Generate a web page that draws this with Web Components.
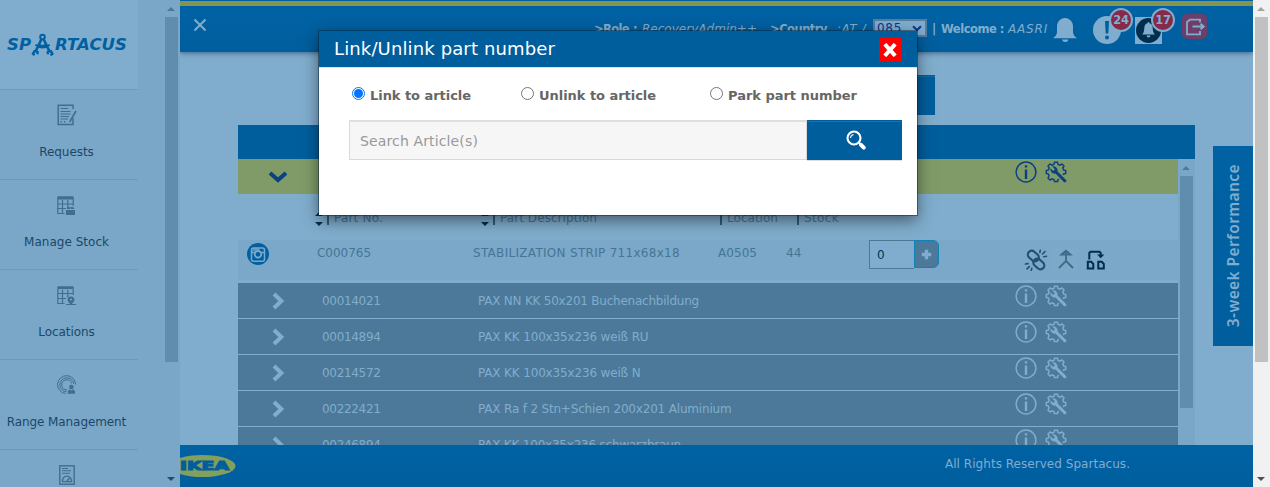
<!DOCTYPE html>
<html lang="en">
<head>
<meta charset="utf-8">
<title>Spartacus</title>
<style>
html,body{margin:0;height:100%;overflow:hidden}
body{font:12px/16px "DejaVu Sans",Verdana,sans-serif;background:#80adcd}
</style>
</head>
<body>
<sp-app></sp-app>
<script>
const define=(name,html,setup)=>{
  const t=document.createElement('template');
  customElements.define(name,class extends HTMLElement{
    connectedCallback(){
      if(this.shadowRoot)return;
      t.innerHTML=typeof html==='function'?html(this):html;
      this.attachShadow({mode:'open'}).appendChild(t.content.cloneNode(true));
      if(setup)setup(this);
    }
  });
};

/* A run of text tracked so that it fills the width given in "w". */
define('fit-text','<style>:host{display:inline-block;flex:none;white-space:pre}span{display:inline-block;white-space:pre}</style><span><slot></slot></span>',el=>{
  const w=+el.getAttribute('w'),s=el.shadowRoot.querySelector('span');
  el.style.width=w+'px';
  const n=el.textContent.length;
  s.style.letterSpacing=((w-s.getBoundingClientRect().width)/n)+'px';
});

const gear='<g transform="translate(11 11)" fill="none" stroke="currentColor" stroke-width="1.5"><path stroke-linejoin="round" d="M3 7.3 2 7.6 1.6 9.6H-1.6L-2 7.6-4 6.8-6 8-8 6-6.9 4-7.6 2-9.7 1.6V-1.6L-7.6-2-6.8-4-8-6-6-8-4-6.8-2-7.6-1.6-9.7H1.6L2-7.6 4-6.8 6-8 8-6 6.8-4 7.6-2 9.7-1.6V1.6L7.6 2 7.2 3"/><path stroke="none" fill="currentColor" d="M-5.6-3.8-2.8-1.1-1.1-2.7-3.8-5.5A4.4 4.4 0 0 1 1.6-.4L10.3 8.2Q10.9 10.5 8.1 10.3L-.5 1.6A4.4 4.4 0 0 1-5.6-3.8Z"/></g>';
const icons={
 close:[14,'<path d="M1.5 1.5 12.5 12.5M12.5 1.5 1.5 12.5" stroke="currentColor" stroke-width="2" fill="none"/>'],
 requests:[20,'<g fill="none" stroke="currentColor" stroke-width="1.5"><path d="M16 5V1.2H1.2V20.5H16V14"/><path stroke-width="1.1" d="M3.5 4.5H11M3.5 7.5H13.5M3.5 10H13.5M3.5 12.5H12M3.5 15H11"/><path d="M3.5 17.7h1.4M7 17.7h1.4" stroke-width="1.5"/><path d="M19 7 13.8 15.8 13 18" stroke-width="1.7"/></g>',22],
 stock:[19,'<g fill="none" stroke="currentColor"><path fill="currentColor" d="M.8.8H16.2V3H.8z"/><path stroke-width="1.2" d="M.8 3V17.5H7.5M16.2 3V10M5.5 4V17M10.8 4V12M.8 8H16M.8 12.5H9"/><path fill="currentColor" stroke="none" d="M9 14H18V19H9zM9.5 13 11 11h2.5V13zM14 13V11h2l1.5 2z"/></g>'],
 locations:[19,'<g fill="none" stroke="currentColor"><path fill="currentColor" d="M.8.8H16.2V2.6H.8z"/><path stroke-width="1.2" d="M.8 3V17.5H7.5M16.2 3V9M5.5 4V17M10.8 4V11.5M.8 7.5H16M.8 12.5H9M9 18.5H19"/><path fill="currentColor" fill-rule="evenodd" stroke="none" d="M14 10.5a3.4 3.4 0 0 1 3.4 3.4C17.4 15.5 14 18.7 14 18.7S10.6 15.5 10.6 13.9A3.4 3.4 0 0 1 14 10.5m0 2.1a1 1 0 1 0 0 2 1 1 0 0 0 0-2"/></g>'],
 range:[20,'<g fill="none" stroke="currentColor" stroke-width="1"><path d="M8.5 18.6A9 9 0 1 1 18.6 9.5"/><path d="M9.5 16.8A7 7 0 1 1 16.8 9"/><path d="M10 14.8A5 5 0 1 1 14.6 8.5"/><circle cx="14.4" cy="12" r="2.2" fill="currentColor" stroke="none"/><path d="M10.8 18.8V16l2.2-1.7 1.4 1.5 1.4-1.5 2.2 1.7v2.8z" fill="currentColor" stroke="none"/></g>'],
 report:[16,'<g fill="none" stroke="currentColor" stroke-width="1.4"><rect x=".8" y=".8" width="14.4" height="18.4"/><path stroke-width="1.1" d="M3 3.5H9M3 5.8H12M3 8.2H11"/><path d="M3.6 16.6A4.5 4.5 0 1 1 12.4 16.6Z"/><path d="M8 16 10.5 13"/></g>',20],
 compass:[24,'<g fill="none" stroke="currentColor"><circle cx="11.5" cy="4" r="2.3" stroke-width="2"/><path stroke-width="2.6" d="M10.3 6.5 4.8 18M12.8 6.5 18.3 18"/><path stroke-width="1.8" d="M4.5 11.8Q11.5 17.2 18.7 11.8M7.8 11.6Q11.5 14 15.2 11.6"/><path stroke-width="2.4" d="M3.5 22.3 2 20.7 3.6 18.2 6.5 18.9 6.6 21.2M19.5 22.3 21.4 20.7 19.8 18.2 16.8 18.9 16.8 21.2"/></g>'],
 bell:[24,'<path fill="currentColor" d="M12 0C15 0 19.8 2.5 20 8V15Q20.4 17.5 24 20.2H0Q3.6 17.5 4 15V8C4.2 2.5 9 0 12 0M9 21.5H15.5Q15 24 12.2 24 9.5 24 9 21.5"/>'],
 alert:[28,'<circle cx="14" cy="14" r="14" fill="currentColor"/><path d="M12 5h4l-.7 12.5h-2.6z" fill="#005e9d"/><circle cx="14" cy="21.5" r="2" fill="#005e9d"/>'],
 bellbox:[27,'<path d="M0 0H27V27H0z" fill="#80adcd"/><circle cx="13.5" cy="13.5" r="12.5" fill="#002e4e"/><path fill="#80adcd" d="M13.5 5q1 0 1 1.3 3 .7 3.2 4.7.1 4.8 2.3 6.5H7q2.2-1.7 2.3-6.5.2-4 3.2-4.7 0-1.3 1-1.3M11.5 18.5h4q-.2 2-2 2t-2-2"/>'],
 logout:[25,'<rect width="25" height="25" rx="5" fill="#6d3e6a"/><path d="M18 8.5V5.7H8L5 8V20.4H18V17M10.5 12.5H21.5M18.5 9.8 21.8 12.5 18.5 15.2" fill="none" stroke="#80adcd" stroke-width="1.8"/>'],
 down:[20,'<path d="M2 2 10 9 18 2" fill="none" stroke="currentColor" stroke-width="4"/>',12],
 right:[13,'<path d="M2 2 9.3 9 2 16" fill="none" stroke="currentColor" stroke-width="4"/>',18],
 info:[22,'<circle cx="11" cy="11" r="9.9" fill="none" stroke="currentColor" stroke-width="1.5"/><path d="M9.8 4.2h2.4v2.4H9.8zM9.8 8.5h2.4V18H9.8z" fill="currentColor"/>'],
 gear:[22,gear],
 camera:[22,'<circle cx="11" cy="11" r="11" fill="currentColor"/><g fill="none" stroke="#7ba8c8" stroke-width="1.5"><rect x="4.5" y="5" width="13" height="13.2" rx="2"/><path d="M5 9.6H8M14 9.6H17"/><circle cx="11" cy="11.3" r="3.3" stroke-width="1.8"/></g><path d="M6 5h6.5v3.2H5.2z" fill="#7ba8c8" opacity=".75"/>'],
 unlink:[24,'<g fill="none" stroke="currentColor" stroke-width="2.2" stroke-linecap="round"><rect x="-6" y="-3.9" width="12" height="7.8" rx="3.9" transform="translate(9.3 8) rotate(42)"/><rect x="-6" y="-3.9" width="12" height="7.8" rx="3.9" transform="translate(14.8 16) rotate(42)"/><path stroke-width="1.6" d="M15.8 4.5 16.3 2.2M18.5 6 21 3.5M19.8 8.7 22.5 8.2M1.5 16 4 15.6M3 20.8 5.3 18.6M7.3 22.3 7.8 20.3"/></g>'],
 merge:[24,'<path d="M0 0H24V24H0z" fill="#7da9c9"/><path d="M5 20 12 13V4M12 13 19 20M7.5 6.5 12 2.6 16.5 6.5Z" fill="none" stroke="currentColor" stroke-width="1.8"/>'],
 relocate:[22,'<g fill="none" stroke="currentColor" stroke-width="2"><path d="M4.3 10.5V4L5.5 2.8H14.5L15.7 4V7"/><path d="M12 5.5H19.4L15.7 9.2Z" fill="currentColor" stroke="none"/><path d="M2.8 12.8H6.3L8.3 15V19.4H2.8zM13.3 12.8H16.8L18.8 15V19.4H13.3z"/></g>'],
 search:[22,'<circle cx="9" cy="9" r="6.5" fill="none" stroke="#fff" stroke-width="2.1"/><path d="M5.5 9Q5.8 5.8 8.6 5.5" fill="none" stroke="#fff" stroke-width="1.1"/><path d="M13.5 13.2 15 14.8" stroke="#fff" stroke-width="2"/><path d="M16 15.8 18.8 18.6" stroke="#fff" stroke-width="4" stroke-linecap="round"/>'],
 cross:[14,'<path d="M1.8 1.2 12.2 12.8M12.2 1.2 1.8 12.8" stroke="#fff" stroke-width="4"/>'],
 plus:[11,'<path d="M5.5.8V10.2M.8 5.5H10.2" stroke="currentColor" stroke-width="3.4"/>'],
 up:[8,'<path d="M0 4 4 0 8 4z" fill="currentColor"/>',4],
 dn:[8,'<path d="M0 0H8L4 4z" fill="currentColor"/>',4],
 chev:[10,'<path d="M1 1.2 5 5 9 1.2" fill="none" stroke="currentColor" stroke-width="2"/>',7],
 ikea:[56,'<ellipse cx="22.5" cy="11" rx="33" ry="11" fill="#839f5e"/><text x="0" y="15.4" textLength="49" lengthAdjust="spacingAndGlyphs" font-family="DejaVu Sans" font-weight="700" font-size="12.2" fill="#005e9d" stroke="#005e9d" stroke-width="1.1">IKEA</text>',22]
};
define('ui-icon',el=>{const [w,b,h=w]=icons[el.getAttribute('name')];
 return `<style>:host{display:block;flex:none;width:${w}px;height:${h}px}svg{display:block}</style><svg width="${w}" height="${h}" viewBox="0 0 ${w} ${h}">${b}</svg>`});

/* Classic scrollbar; "len" is the thumb length. */
define('scroll-bar',el=>`<style>
:host{display:flex;flex-direction:column;align-items:center;flex:none;width:17px;box-sizing:border-box;background:var(--track,#7aa7c7);color:var(--up,#4c7999)}
.t{width:13px;height:${el.getAttribute('len')}px;background:var(--thumb,#608dad);margin-right:1px}
.a{height:17px;display:flex;align-items:center;margin-right:1px}.b{margin-top:auto;color:var(--down,#1f4c6c)}
</style><div class="a"><ui-icon name="up"></ui-icon></div><div class="t"></div>${el.hasAttribute('end')?'<div class="a b"><ui-icon name="dn"></ui-icon></div>':''}`);

define('nav-item',el=>`<style>
:host{display:flex;flex-direction:column;align-items:center;height:90px;box-sizing:border-box;border-bottom:1px solid #6d9aba;color:#1a4767;width:138px;flex:none;padding-right:5px}
.i{height:50px;display:flex;align-items:center;color:#416e8e}.x{margin-top:4px}
</style><div class="i"><ui-icon name="${el.getAttribute('icon')}"></ui-icon></div><div class="x"><slot></slot></div>`);

define('side-bar',`<style>
:host{display:flex;justify-content:space-between;background:#7aa7c7;overflow:hidden;height:487px}
.n{display:flex;flex-direction:column;width:138px}
.logo{height:88px;padding-top:1px;flex:none;background:#80adcd;border-bottom:1px solid #6d9aba;display:flex;align-items:center;color:#0060a1;font:italic bold 16.5px/20px "DejaVu Sans",sans-serif;padding-left:7px;width:131px}
</style><div class="n"><div class="logo"><fit-text w="24">SP</fit-text><ui-icon name="compass"></ui-icon><fit-text w="72">RTACUS</fit-text></div>
<nav-item icon="requests"><fit-text w="54.5">Requests</fit-text></nav-item>
<nav-item icon="stock"><fit-text w="85">Manage Stock</fit-text></nav-item>
<nav-item icon="locations"><fit-text w="56.5">Locations</fit-text></nav-item>
<nav-item icon="range"><fit-text w="119.5">Range Management</fit-text></nav-item>
<nav-item icon="report"></nav-item></div>
<scroll-bar len="345" end></scroll-bar>`);

define('count-badge',`<style>:host{display:flex;align-items:center;justify-content:center;width:20px;height:20px;border:2px solid #80adcd;border-radius:50%;background:#86294a;color:#80adcd;font-size:11.5px;line-height:20px;letter-spacing:-.2px}</style><slot></slot>`);

define('top-bar',`<style>
:host{display:block;height:52px;flex:none;background:linear-gradient(#0060a1 0 1px,#849550 1px 6px,#0062a4 6px,#005e9d);box-shadow:0 1px 5px rgba(0,40,80,.55);color:#80adcd;position:relative;z-index:1;font-weight:bold;font-size:11.5px}
.r{display:flex;height:52px;align-items:flex-start}
.x{margin:18px 385px 0 13px}
fit-text{margin-top:21px}i{font-weight:normal;font-size:12px}
.sel{margin:19px 5px 0 7px;width:54px;height:18px;border:2px solid #587d9f;background:#80adcd;color:#0a3591;box-sizing:border-box;display:flex;align-items:center;justify-content:space-between;padding:0 3px 0 2px;font-weight:normal;font-size:12px}
.sel fit-text{margin:0}
.b{position:relative}.b count-badge{position:absolute;left:16px;top:-8px}
</style><div class="r"><ui-icon class="x" name="close"></ui-icon>
<fit-text w="35" style="margin-left:2px">&gt;Role</fit-text><fit-text w="5" style="margin-left:4px">:</fit-text><i><fit-text w="115" style="margin-left:4px">RecoveryAdmin++</fit-text></i><fit-text w="57" style="margin-left:13px">&gt;Country</fit-text><i><fit-text w="29" style="margin-left:10px">:AT /</fit-text></i>
<div class="sel"><fit-text w="25">085</fit-text><ui-icon name="chev"></ui-icon></div>
<fit-text w="4">|</fit-text><fit-text w="63" style="margin-left:5px">Welcome :</fit-text><i><fit-text w="40" style="margin-left:4px">AASRI</fit-text></i>
<ui-icon name="bell" style="margin:18px 0 0 5px"></ui-icon>
<div class="b" style="margin:16px 0 0 16px"><ui-icon name="alert"></ui-icon><count-badge>24</count-badge></div>
<div class="b" style="margin:17px 0 0 14px"><ui-icon name="bellbox"></ui-icon><count-badge style="top:-9px">17</count-badge></div>
<ui-icon name="logout" style="margin:14px 0 0 20px"></ui-icon></div>`);

define('article-row',el=>`<style>
:host{display:grid;grid-template-columns:84px 156px 537px 30px 1fr;height:35px;flex:none;border-bottom:1px solid #80adcd;background:#4c7999;color:#80adcd}
:host([open]){background:#809b68;color:#0a4280;border-color:transparent;background-clip:padding-box}
.c{padding:9px 0 0 33.5px}:host([open]) .c{padding:12px 0 0 30px}
.t{padding-top:10px}.i{padding-top:2px}
</style><div class="c"><ui-icon name="${el.hasAttribute('open')?'down':'right'}"></ui-icon></div><div class="t">${el.hasAttribute('code')?`<fit-text w="58.5">${el.getAttribute('code')}</fit-text>`:''}</div><div class="t"><slot></slot></div><ui-icon class="i" name="info"></ui-icon><ui-icon class="i" name="gear"></ui-icon>`);

define('part-head',`<style>
:host{display:flex;height:45px;flex:none;color:#477494;align-items:flex-start;padding-left:77px}
.s{display:flex;flex-direction:column;gap:6px;margin-top:17px;width:8px;color:#002e4e}
.b{width:2px;height:15px;background:#2f5c7c;margin:15px 5px 0 4px}
fit-text{margin-top:15px}
</style><div class="s"><ui-icon name="up"></ui-icon><ui-icon name="dn"></ui-icon></div><div class="b"></div><fit-text w="49">Part No.</fit-text>
<div class="s" style="margin-left:98px"><ui-icon name="up"></ui-icon><ui-icon name="dn"></ui-icon></div><div class="b"></div><fit-text w="97">Part Description</fit-text>
<div class="b" style="margin-left:123px"></div><fit-text w="51">Location</fit-text><div class="b" style="margin-left:19px"></div><fit-text w="35">Stock</fit-text>`);

define('part-row',`<style>
:host{display:grid;grid-template-columns:79px 156px 245px 68px 83px 45px 25px 85px 30px 31px 1fr;height:40px;flex:none;background:#7ba8c8;color:#457595;margin-bottom:3px}
.t{padding-top:5px}.cam{margin:3px 0 0 9px;color:#0060a1}
.q{height:27px;border:1px solid #4c7999;border-right:0;box-sizing:content-box;width:44px;color:#003458;background:#80adcd}
.q span{display:block;padding:6px 0 0 7px}
.p{height:26px;width:23px;border:1px solid #0f82b8;border-radius:0 6px 6px 0;background:#4c7999;color:#80adcd;display:flex;align-items:center;justify-content:center}
</style><ui-icon class="cam" name="camera"></ui-icon><div class="t"><fit-text w="54">C000765</fit-text></div><div class="t"><fit-text w="207">STABILIZATION STRIP 711x68x18</fit-text></div><div class="t"><fit-text w="39">A0505</fit-text></div><div class="t"><fit-text w="15.5">44</fit-text></div>
<div class="q"><span>0</span></div><div class="p"><ui-icon name="plus"></ui-icon></div><span></span>
<ui-icon name="unlink" style="margin-top:8px;color:#24506f"></ui-icon><ui-icon name="merge" style="margin-top:8px;color:#3b6b8a"></ui-icon><ui-icon name="relocate" style="margin-top:9px;color:#002e4e"></ui-icon>`);

define('article-table',`<style>
:host{display:block;width:957px;height:320px;overflow:hidden}
.h{height:34px;background:#005e9d}.m{display:flex;height:286px}
.l{width:940px;height:286px;overflow:hidden;display:flex;flex-direction:column}
</style><div class="h"></div><div class="m"><div class="l">
<article-row open></article-row><part-head></part-head><part-row></part-row>
<article-row code="00014021"><fit-text w="221">PAX NN KK 50x201 Buchenachbildung</fit-text></article-row>
<article-row code="00014894"><fit-text w="170.5">PAX KK 100x35x236 weiß RU</fit-text></article-row>
<article-row code="00214572"><fit-text w="162.5">PAX KK 100x35x236 weiß N</fit-text></article-row>
<article-row code="00222421"><fit-text w="253.5">PAX Ra f 2 Stn+Schien 200x201 Aluminium</fit-text></article-row>
<article-row code="00246894"><fit-text w="203">PAX KK 100x35x236 schwarzbraun</fit-text></article-row>
</div><scroll-bar len="232"></scroll-bar></div>`);

define('page-footer',`<style>:host{display:flex;height:42px;flex:none;background:linear-gradient(#0062a4,#005e9d);color:#80adcd}
ui-icon{margin-top:10px}fit-text{margin:11px 0 0 709px}</style><ui-icon name="ikea"></ui-icon><fit-text w="185">All Rights Reserved Spartacus.</fit-text>`);

define('performance-tab',`<style>:host{display:flex;align-items:center;justify-content:center;width:40px;height:200px;background:linear-gradient(#0062a4,#005e9d);color:#80adcd;font:600 15.5px/20px "Noto Sans","Open Sans",sans-serif}
div{writing-mode:vertical-rl;transform:rotate(180deg);white-space:nowrap;letter-spacing:.4px;padding-bottom:0}</style><div>3-week Performance</div>`);

define('radio-option',el=>`<style>:host{display:flex;align-items:flex-start;color:#666;font:bold 13px/18px "DejaVu Sans",sans-serif}
.r{width:13px;height:13px;box-sizing:border-box;border:1px solid #767676;border-radius:50%;margin:0 5px 0 0;display:flex;align-items:center;justify-content:center;background:#fff}
:host([checked]) .r{border-color:#0075ff}:host([checked]) .r::after{content:"";width:9px;height:9px;border-radius:50%;background:#0075ff}</style><div class="r"></div><slot></slot>`);

define('link-dialog',`<style>
:host{display:block;position:absolute;left:319px;top:31px;width:598px;height:184px;background:#fff;box-shadow:0 0 0 1px rgba(0,30,50,.45),0 5px 15px rgba(0,0,0,.5);z-index:5}
.h{background:#005e9d;border-bottom:1px solid #dde1e4;color:#fff;display:flex;font-size:18px;line-height:24px;justify-content:space-between;box-sizing:border-box;height:37px}
.h fit-text{margin:6px 0 0 15px}.x{width:23px;height:24px;margin:6px 15px 0 0;background:#f00;display:flex;align-items:center;justify-content:center}
.x ui-icon{margin:2px 2px 0 0}
.o{display:grid;grid-template-columns:169px 189px 1fr;padding:19px 0 0 33px;height:33px;box-sizing:content-box}
.s{display:flex;margin-left:30px;width:553px;height:40px}
.f{width:458px;box-sizing:border-box;background:#f6f6f6;border:1px solid #d9d9d9;border-top:2px solid #dedede;color:#999;font-size:14px;line-height:18px;padding:10px 0 0 10px}
.g{width:95px;background:#005e9d;box-shadow:inset 0 1px #005e9d,inset 0 2px #1c70a8,0 1px #ddd;display:flex;align-items:center;justify-content:center}
.g ui-icon{margin:0 0 0 2px}
</style><div class="h"><fit-text w="221">Link/Unlink part number</fit-text><div class="x"><ui-icon name="cross"></ui-icon></div></div>
<div class="o"><radio-option checked><fit-text w="101">Link to article</fit-text></radio-option><radio-option><fit-text w="117">Unlink to article</fit-text></radio-option><radio-option><fit-text w="129">Park part number</fit-text></radio-option></div>
<div class="s"><div class="f"><fit-text w="118">Search Article(s)</fit-text></div><div class="g"><ui-icon name="search"></ui-icon></div></div>`);

define('sp-app',`<style>
:host{display:grid;grid-template-columns:180px 1073px 17px;width:1270px;height:487px;overflow:hidden;position:relative}
.m{display:flex;flex-direction:column;background:#80adcd;height:487px;overflow:hidden}
.c{height:393px;display:flex}
.w{margin:23px 18px 0 58px;width:957px}
.btn{width:160px;height:40px;margin:0 0 10px 537px;background:#005e9d;box-shadow:inset 0 1px #005e9d,inset 0 2px #1469a5}
performance-tab{margin-top:94px}
.page{--track:#f1f1f1;--thumb:#c1c1c1;--up:#a3a3a3;--down:#505050}
</style><side-bar></side-bar><div class="m"><top-bar></top-bar><div class="c"><div class="w"><div class="btn"></div><article-table></article-table></div><performance-tab></performance-tab></div><page-footer></page-footer></div>
<scroll-bar class="page" len="345" end></scroll-bar><link-dialog></link-dialog>`);
</script>
</body>
</html>
